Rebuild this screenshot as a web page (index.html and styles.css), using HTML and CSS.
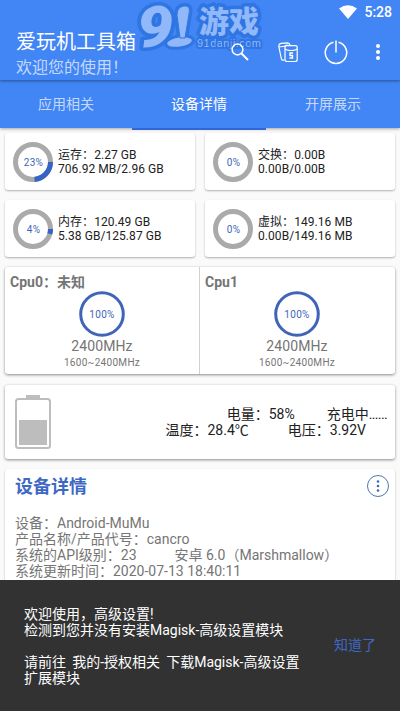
FILE: index.html
```html
<!DOCTYPE html>
<html lang="zh-CN">
<head>
<meta charset="utf-8">
<title>爱玩机工具箱</title>
<link rel="stylesheet" href="styles.css">
</head>
<body>
<div class="screen">
  <header class="header">
    <svg class="watermark" viewBox="0 0 136 60" width="136" height="60">
      <text class="mark-nine" x="5" y="47" textLength="36" lengthAdjust="spacingAndGlyphs">9</text>
      <g class="mark-shape">
        <path d="M52 6Q59 5 57 14L53 38H48L45 15Q45 7 52 6Z"/>
        <ellipse cx="47.500" cy="42" rx="12.500" ry="4.500" transform="rotate(-8 48 42)"/>
      </g>
      <path class="mark-bang" d="M52 6Q59 5 57 14L53 38H48L45 15Q45 7 52 6Z"/>
      <text class="mark-name" x="67" y="32">游戏</text>
      <text class="mark-url" x="65" y="47" textLength="64">91danji.com</text>
    </svg>
    <div class="status">
      <svg width="18" height="14" viewBox="0 0 18 14"><path d="M0 3.500Q9-3 18 3.500L9 14Z" fill="#fff"/></svg>
      <span>5:28</span>
    </div>
    <div class="toolbar">
      <div class="titles">
        <h1>爱玩机工具箱</h1>
        <p>欢迎您的使用！</p>
      </div>
      <div class="actions">
        <svg width="18" height="18" viewBox="0 0 18 18" fill="none" stroke="#fff"><circle cx="6.500" cy="6.500" r="5.400" stroke-width="1.500"/><path d="M10.500 10.500L17 17" stroke-width="2"/></svg>
        <svg width="20" height="21" viewBox="0 0 20 21" fill="none" stroke="#fff" stroke-width="1.200"><path d="M3.500 17.500L.8 4.300Q.6 1.800 3 1.300L9.500.8Q11.500.8 12 3M.8 4.500Q5 5.500 9.500 2.800M3.500 17.500Q4.500 18.500 6.500 18"/><path d="M7 5.500Q7 3.700 9 3.700H17Q19.200 3.700 19.200 5.500V17.500Q19.200 19.500 17 19.500H9Q7 19.500 7 17.500ZM7 6.500Q8 8.500 13 8.500T19.200 6.500"/><path d="M15 11H12V13.500H14.500V16H11.500" stroke-width="1.400"/></svg>
        <svg width="24" height="25" viewBox="0 0 24 25" fill="none" stroke="#fff" stroke-width="1.500"><path d="M9.500 2.300A10.700 10.700 0 1 0 14.500 2.300M12 .5V12.500"/></svg>
        <svg width="4" height="16" viewBox="0 0 4 16" fill="#fff"><circle cx="2" cy="2" r="2"/><circle cx="2" cy="8" r="2"/><circle cx="2" cy="14" r="2"/></svg>
      </div>
    </div>
  </header>
  <nav class="tabs">
    <span>应用相关</span><span class="active">设备详情</span><span>开屏展示</span>
  </nav>
  <main>
    <section class="memory">
      <article class="card stat">
        <svg class="ring" width="40" height="40" viewBox="0 0 40 40"><circle cx="20" cy="20" r="17.500"/><path d="M37.500 20A17.500 17.500 0 0 1 21.500 37.400"/><text x="20.500" y="24">23%</text></svg>
        <div><p>运存：2.27 GB</p><p>706.92 MB/2.96 GB</p></div>
      </article>
      <article class="card stat">
        <svg class="ring" width="40" height="40" viewBox="0 0 40 40"><circle cx="20" cy="20" r="17.500"/><text x="20.500" y="24">0%</text></svg>
        <div><p>交换：0.00B</p><p>0.00B/0.00B</p></div>
      </article>
      <article class="card stat">
        <svg class="ring" width="40" height="40" viewBox="0 0 40 40"><circle cx="20" cy="20" r="17.500"/><path d="M37.500 20A17.500 17.500 0 0 1 36.800 24.900"/><text x="20.500" y="24">4%</text></svg>
        <div><p>内存：120.49 GB</p><p>5.38 GB/125.87 GB</p></div>
      </article>
      <article class="card stat">
        <svg class="ring" width="40" height="40" viewBox="0 0 40 40"><circle cx="20" cy="20" r="17.500"/><text x="20.500" y="24">0%</text></svg>
        <div><p>虚拟：149.16 MB</p><p>0.00B/149.16 MB</p></div>
      </article>
    </section>
    <section class="card cpus">
      <article class="cpu">
        <h2>Cpu0：未知</h2>
        <svg class="ring full" width="46" height="46" viewBox="0 0 46 46"><circle cx="23" cy="23" r="21.300"/><text x="23" y="26.500">100%</text></svg>
        <p class="freq">2400MHz</p><p class="range">1600~2400MHz</p>
      </article>
      <article class="cpu">
        <h2>Cpu1</h2>
        <svg class="ring full" width="46" height="46" viewBox="0 0 46 46"><circle cx="23" cy="23" r="21.300"/><text x="23" y="26.500">100%</text></svg>
        <p class="freq">2400MHz</p><p class="range">1600~2400MHz</p>
      </article>
    </section>
    <section class="card battery">
      <svg width="36" height="54" viewBox="0 0 36 54"><path d="M11 0H25V4H11Z" fill="#bdbdbd"/><rect x="1" y="4" width="34" height="49" rx="2.500" fill="none" stroke="#bdbdbd" stroke-width="2"/><path d="M4 25H32V50H4Z" fill="#bdbdbd"/></svg>
      <div class="readings">
        <p class="charge"><span>电量：58%</span><span>充电中<span class="dots">......</span></span></p>
        <p class="power"><span>温度：28.4℃</span><span>电压：3.92V</span></p>
      </div>
    </section>
    <section class="card details">
      <div class="details-head">
        <h2>设备详情</h2>
        <svg width="22" height="22" viewBox="0 0 22 22" fill="#3b66c4"><circle cx="11" cy="11" r="10.500" fill="none" stroke="#3b66a8" stroke-width=".9"/><circle cx="11" cy="6.500" r="1.300"/><circle cx="11" cy="11" r="1.300"/><circle cx="11" cy="15.500" r="1.300"/></svg>
      </div>
      <p>设备：Android-MuMu</p>
      <p>产品名称/产品代号：cancro</p>
      <p class="api"><span>系统的API级别：23</span><span>安卓 6.0（Marshmallow）</span></p>
      <p>系统更新时间：2020-07-13 18:40:11</p>
    </section>
  </main>
  <aside class="snackbar">
    <div class="message">
      <p>欢迎使用，高级设置!</p>
      <p>检测到您并没有安装Magisk-高级设置模块</p>
      <p class="next">请前往&nbsp; 我的-授权相关&nbsp; 下载Magisk-高级设置</p>
      <p>扩展模块</p>
    </div>
    <button>知道了</button>
  </aside>
</div>
</body>
</html>
```
FILE: styles.css
```css
* { box-sizing: border-box; }
body, h1, h2, p { margin: 0; }
body {
  background: #fafafa;
  font-family: Roboto, "Noto Sans CJK SC", sans-serif;
  color: #212121;
}
p, h1, h2, span { white-space: nowrap; }
.screen {
  width: 400px;
  height: 711px;
  overflow: hidden;
  display: flex;
  flex-direction: column;
}
.header {
  position: relative;
  z-index: 2;
  flex: none;
  height: 80px;
  background: #4285f4;
  color: #fff;
  box-shadow: 0 1px 3px rgba(0, 0, 0, .4);
}
.watermark { position: absolute; left: 132px; top: 0; }
.watermark text, .mark-shape {
  fill: #91b8f8;
  stroke: #2f75e3;
  stroke-width: 7;
  stroke-linejoin: round;
  paint-order: stroke;
}
.watermark .mark-nine { font: italic 900 57px Roboto, sans-serif; }
.watermark .mark-name { font: 900 30px "Noto Sans CJK SC", sans-serif; }
.watermark .mark-url { font: 11px "Liberation Sans", sans-serif; stroke-width: 4; }
.mark-shape { stroke-width: 6; }
.mark-bang { fill: #91b8f8; stroke: #2f75e3; stroke-width: 1; }
.status {
  position: relative;
  height: 24px;
  padding-right: 8px;
  display: flex;
  justify-content: flex-end;
  align-items: center;
  gap: 7px;
  font-size: 14px;
  font-weight: 500;
}
.toolbar {
  position: relative;
  height: 56px;
  padding: 5px 20px 0 16px;
  display: flex;
  justify-content: space-between;
}
.titles h1 { font-size: 20px; line-height: 27px; font-weight: 400; }
.titles p { font-size: 16px; line-height: 24px; color: rgba(255, 255, 255, .7); }
.actions { height: 46px; display: flex; align-items: center; }
.actions svg:nth-child(2) { margin-left: 29px; }
.actions svg:nth-child(3) { margin-left: 26px; }
.actions svg:nth-child(4) { margin-left: 28px; }
.tabs {
  position: relative;
  z-index: 1;
  flex: none;
  height: 48px;
  display: grid;
  grid-template-columns: 132px 134px 134px;
  background: #4285f4;
  color: rgba(255, 255, 255, .7);
  box-shadow: 0 1px 3px rgba(0, 0, 0, .35);
  font-size: 14px;
  line-height: 48px;
  text-align: center;
}
.tabs .active { color: #fff; border-bottom: 2px solid #3367d6; }
main {
  flex: 1;
  min-height: 0;
  overflow: hidden;
  padding: 5px 5px 0;
}
.card {
  background: #fff;
  border-radius: 3px;
  box-shadow: 0 1px 2px rgba(0, 0, 0, .3);
}
.memory { display: grid; grid-template-columns: 190px 190px; gap: 10px; }
.stat {
  height: 57px;
  padding-left: 8px;
  display: flex;
  align-items: center;
  gap: 5px;
  font-size: 12px;
  line-height: 14px;
  letter-spacing: .06px;
}
.ring { flex: none; }
.ring circle { fill: none; stroke: #aaa; stroke-width: 5; }
.ring path { fill: none; stroke: #3564c4; stroke-width: 5; }
.ring text { fill: #4267b8; font-size: 10px; text-anchor: middle; letter-spacing: .3px; }
.ring.full circle { stroke: #4065b8; stroke-width: 3; }
.cpus { height: 107px; margin-top: 10px; display: flex; box-shadow: 0 1px 3px rgba(0, 0, 0, .45); }
.cpu {
  width: 195px;
  padding: 6px 6px 0 5px;
  display: flex;
  flex-direction: column;
  align-items: center;
  color: #757575;
}
.cpu:first-child { padding-right: 5px; border-right: 1px solid #d0d0d0; }
.cpu h2 { align-self: flex-start; font-size: 14px; line-height: 18px; font-weight: 700; }
.cpu .freq { font-size: 14px; line-height: 18px; letter-spacing: .1px; }
.cpu .range { font-size: 10px; line-height: 15px; letter-spacing: .3px; }
.battery {
  height: 74px;
  margin-top: 11px;
  padding: 0 8px 0 10px;
  display: flex;
  align-items: center;
  justify-content: space-between;
  font-size: 14px;
  line-height: 16px;
  box-shadow: 0 1px 3px rgba(0, 0, 0, .45);
}
.readings p { display: flex; justify-content: flex-end; }
.charge { gap: 32px; }
.dots { letter-spacing: -.65px; }
.power { gap: 39px; padding-right: 21px; }
.details { height: 180px; margin-top: 10px; padding: 5px 6px 0 10px; }
.details-head {
  height: 41px;
  display: flex;
  justify-content: space-between;
  align-items: flex-start;
  color: #3f68c5;
}
.details h2 { font-size: 18px; line-height: 26px; }
.details-head svg { margin-top: 1px; }
.details p { font-size: 14px; line-height: 16px; color: #757575; }
.api { display: flex; gap: 38px; }
.snackbar {
  position: relative;
  z-index: 3;
  flex: none;
  height: 131px;
  padding: 26px 24px 0;
  display: flex;
  justify-content: space-between;
  background: #323232;
  color: #fff;
  font-size: 14px;
  line-height: 16px;
}
.next { margin-top: 16px; word-spacing: -.4px; }
.snackbar button {
  align-self: flex-start;
  margin-top: 29px;
  padding: 0;
  border: 0;
  background: none;
  color: #3f68c5;
  font: inherit;
  line-height: 20px;
}
```
